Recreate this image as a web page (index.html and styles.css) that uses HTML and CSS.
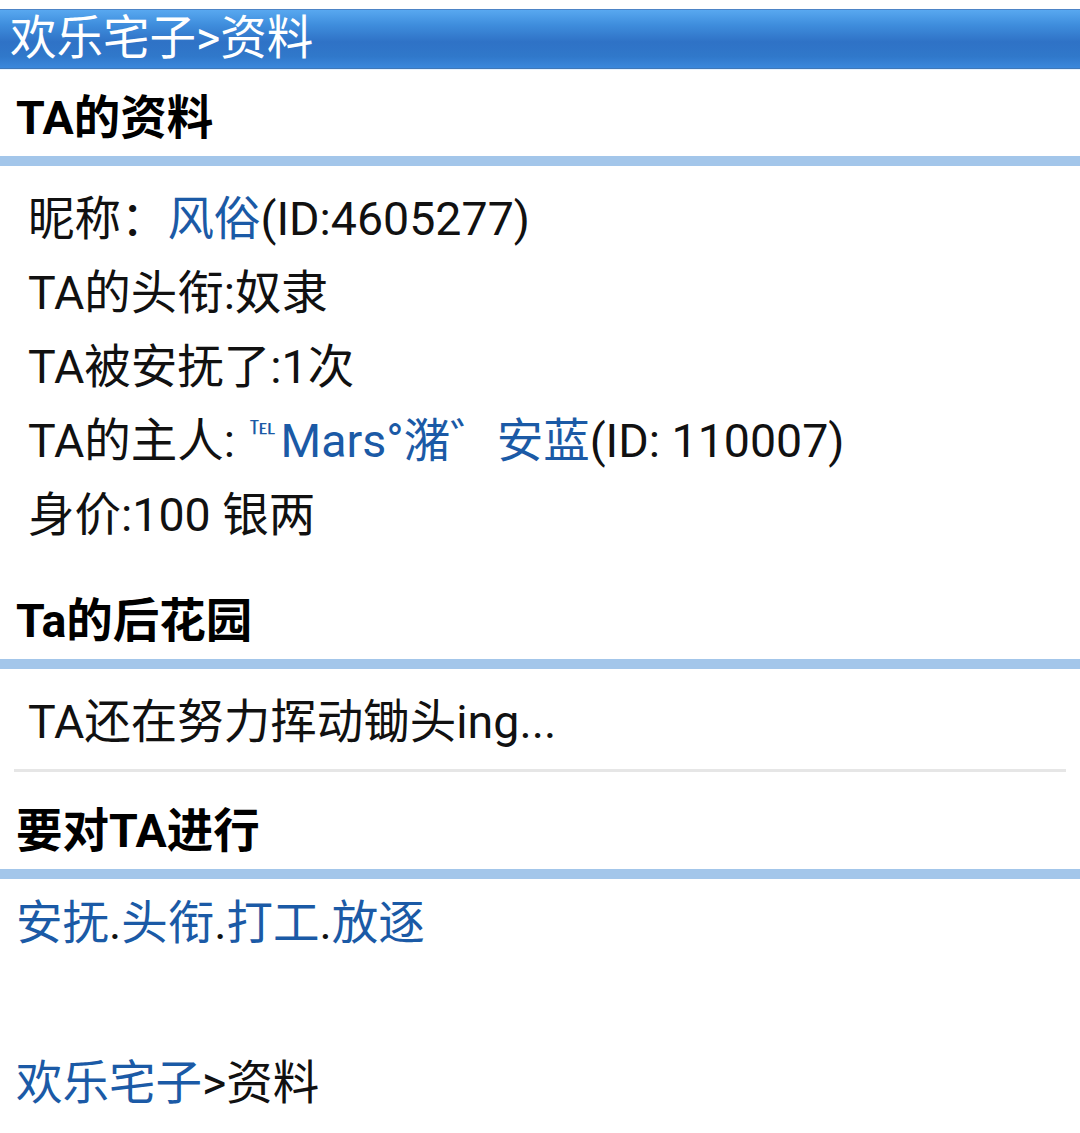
FILE: index.html
```html
<!DOCTYPE html>
<html lang="zh-CN">
<head>
<meta charset="utf-8">
<title>欢乐宅子>资料</title>
<link rel="stylesheet" href="styles.css">
</head>
<body>
<div class="topbar">欢乐宅子&gt;资料</div>

<h2 class="section-title">TA的资料</h2>
<div class="info">
  <div class="line">昵称：<a class="link">风俗</a>(ID:4605277)</div>
  <div class="line">TA的头衔:奴隶</div>
  <div class="line">TA被安抚了:1次</div>
  <div class="line">TA的主人: <a class="link"><span class="tel">℡</span>Mars°潴゛安蓝</a>(ID: 110007)</div>
  <div class="line">身价:100 银两</div>
</div>

<h2 class="section-title">Ta的后花园</h2>
<div class="garden">
  <div class="line">TA还在努力挥动锄头ing...</div>
</div>
<div class="divider"></div>

<h2 class="section-title">要对TA进行</h2>
<div class="actions">
  <a class="link">安抚</a>.<a class="link">头衔</a>.<a class="link">打工</a>.<a class="link">放逐</a>
</div>

<div class="crumbs"><a class="link">欢乐宅子</a>&gt;资料</div>
</body>
</html>
```

FILE: styles.css
```css
html, body {
  margin: 0;
  padding: 0;
  background: #ffffff;
}

body {
  font-family: Roboto, "Noto Sans CJK SC", sans-serif;
  font-size: 46.5px;
  color: #111111;
}

.topbar {
  margin-top: 9px;
  height: 58px;
  line-height: 56px;
  padding-left: 10px;
  color: #ffffff;
  border-top: 1px solid #4d84c6;
  border-bottom: 1px solid #3f78b8;
  background: linear-gradient(to bottom,
    #58a8f0 0%,
    #3f8edd 25%,
    #2f72c6 55%,
    #3078ca 80%,
    #3a88dc 100%);
  box-shadow: 0 1px 0 #e6f3ff;
}

.section-title {
  margin: 0;
  padding: 12px 16px 1px;
  line-height: 74px;
  font-size: 46.5px;
  font-weight: bold;
  color: #000000;
  border-bottom: 10px solid #a3c6ea;
}

.info {
  padding: 16px 28px 20px;
}

.line {
  line-height: 74px;
  white-space: nowrap;
}

.link {
  color: #1b5aa6;
  text-decoration: none;
}

.tel {
  display: inline-block;
  font-size: 26px;
  line-height: 0;
  vertical-align: 20px;
  transform: scaleY(0.7);
  transform-origin: 50% 100%;
  margin: 0 5px 0 3px;
}

.garden {
  padding: 16px 28px 0;
}

.divider {
  margin: 10px 14px 10px;
  height: 3px;
  background: #e6e6e6;
}

.actions {
  padding: 7px 16px 0;
  line-height: 74px;
}

.crumbs {
  margin-top: 86px;
  padding-left: 16px;
  line-height: 74px;
}
```
